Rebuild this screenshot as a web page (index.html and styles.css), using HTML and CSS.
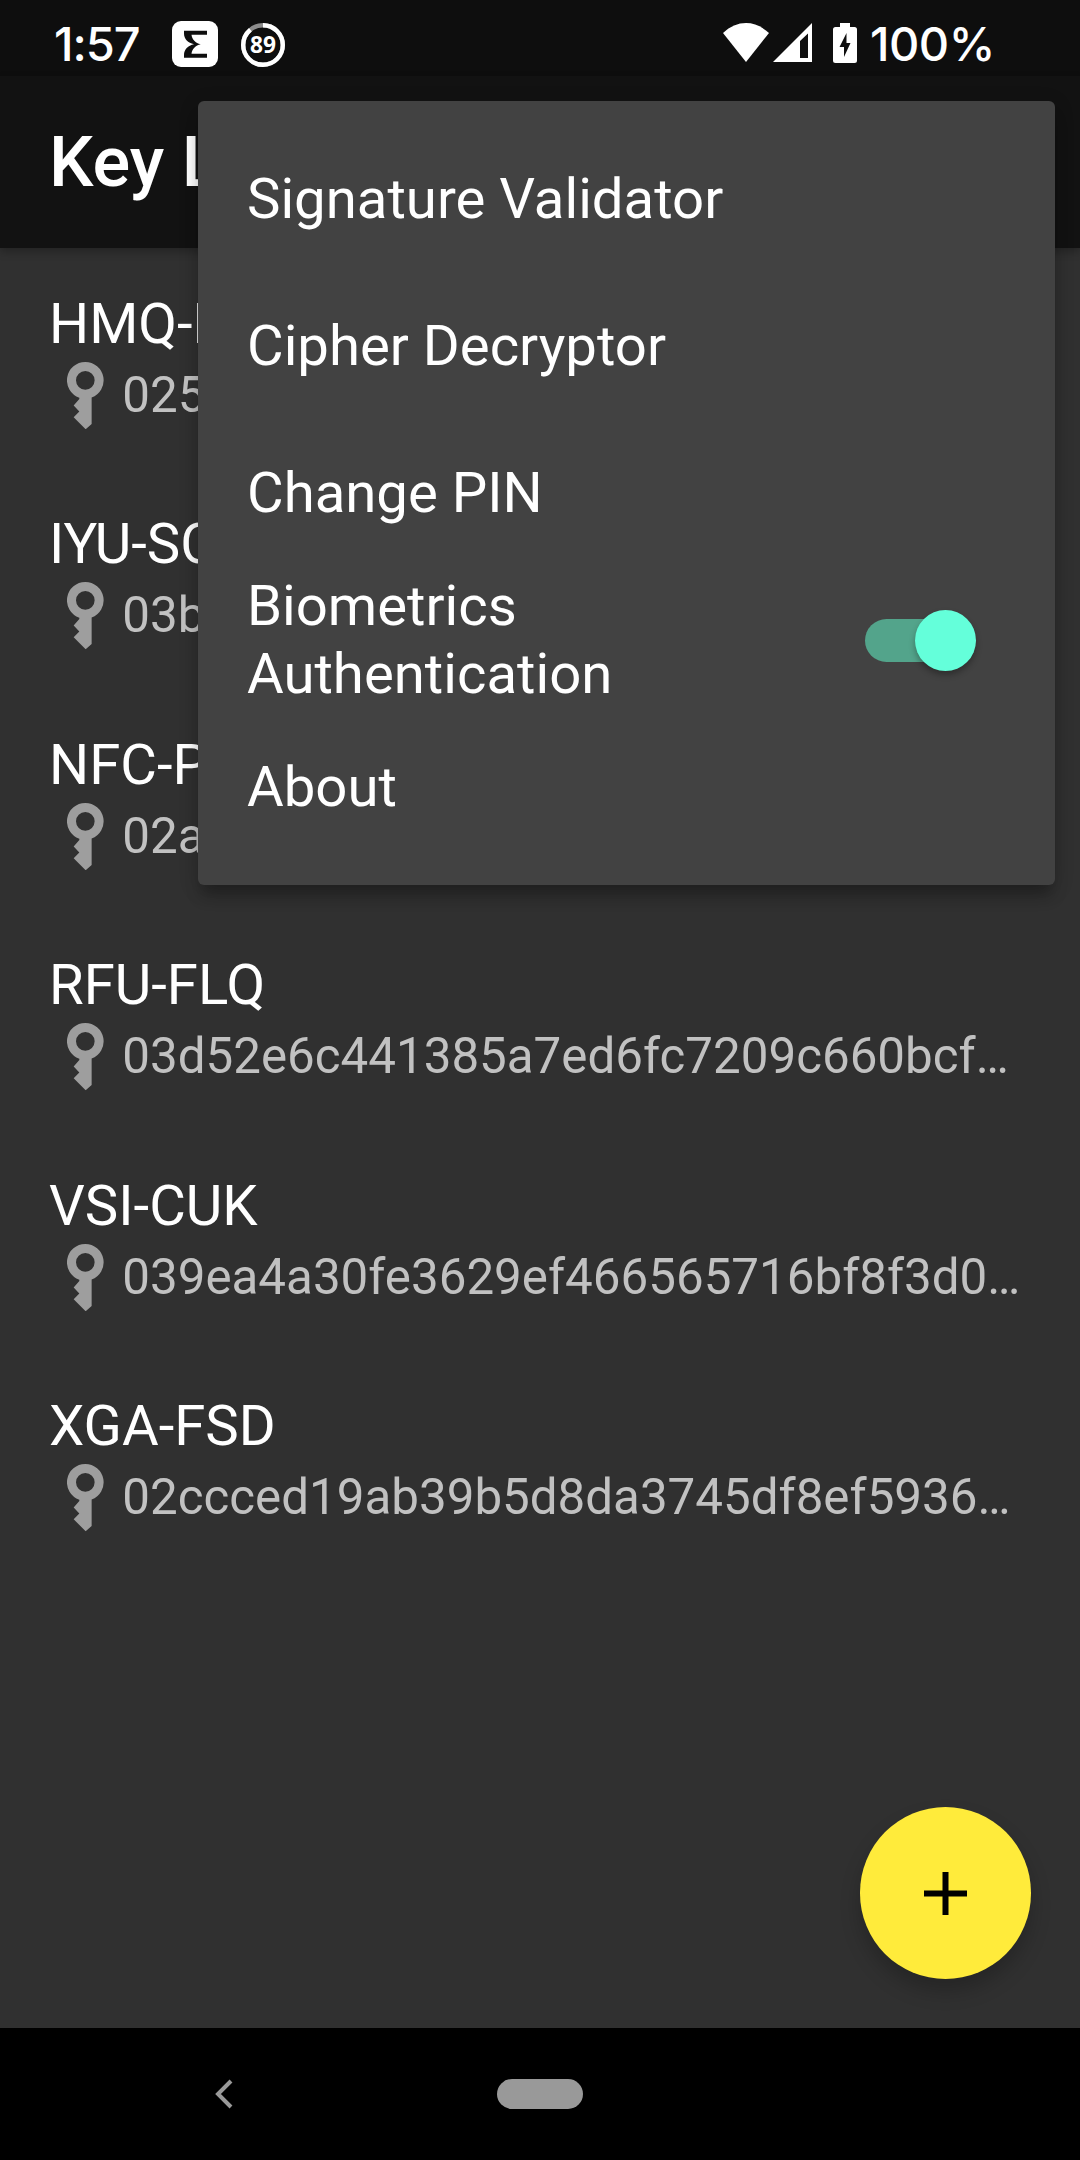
FILE: index.html
```html
<!DOCTYPE html>
<html lang="en">
<head>
<meta charset="utf-8">
<title>Key List</title>
<link rel="stylesheet" href="styles.css">
</head>
<body>
<svg width="0" height="0" class="defs">
  <symbol id="key" viewBox="0 0 112 203">
    <path fill-rule="evenodd" d="M55 0a55 55 0 0 1 19 106.600V186L56 202 20 166 37 149 20 131 37 111V107A55 55 0 0 1 55 0zM55 27a28 28 0 1 0 0 56 28 28 0 0 0 0-56z"/>
  </symbol>
</svg>
<div class="screen">
  <header class="status">
    <span class="clock">1:57</span>
    <svg class="app-badge" viewBox="0 0 46 46"><rect width="46" height="46" rx="9" fill="#fff"/><path d="M12 9.700H35V13.700H19.500C20 18.500 23.500 22 28.700 23.200 23.500 24.500 20 28 19.500 32.700H35V36.700H12V34C12 28.500 16 24.500 22 23.200 16 22 12 18 12 12.500z" fill="#0e0e0e"/></svg>
    <svg class="ring" viewBox="0 0 44 44"><circle cx="22" cy="22" r="19.800" fill="none" stroke="#8c8c8c" stroke-width="4.400"/><circle cx="22" cy="22" r="19.800" fill="none" stroke="#fff" stroke-width="4.400" pathLength="100" stroke-dasharray="89 11" transform="rotate(-90 22 22)"/><text x="22" y="30.300" text-anchor="middle" textLength="26" lengthAdjust="spacingAndGlyphs" class="ring-text">89</text></svg>
    <span class="spacer"></span>
    <svg class="wifi" viewBox="0 0 46 39"><path d="M0 10C14-3.300 32-3.300 46 10L23 39z"/></svg>
    <svg class="signal" viewBox="0 0 39 39"><path fill-rule="evenodd" d="M39 0V39H0zM35 10.500L27 18V35H35z"/></svg>
    <svg class="battery" viewBox="0 0 24 40"><path fill-rule="evenodd" d="M7 0H17V4H21.500Q24 4 24 6.500V37.500Q24 40 21.500 40H2.500Q0 40 0 37.500V6.500Q0 4 2.500 4H7zM13.500 10L6.500 24H11V34L17.500 20H13.500z"/></svg>
    <span class="percent">100%</span>
  </header>
  <div class="appbar"><h1>Key List</h1></div>
  <main class="list">
    <div class="row"><div class="name">HMQ-L</div><div class="hash"><svg class="key"><use href="#key"/></svg><span>025</span></div></div>
    <div class="row"><div class="name">IYU-SC</div><div class="hash"><svg class="key"><use href="#key"/></svg><span>03b</span></div></div>
    <div class="row"><div class="name">NFC-P</div><div class="hash"><svg class="key"><use href="#key"/></svg><span>02a</span></div></div>
    <div class="row"><div class="name">RFU-FLQ</div><div class="hash"><svg class="key"><use href="#key"/></svg><span>03d52e6c441385a7ed6fc7209c660bcf…</span></div></div>
    <div class="row"><div class="name">VSI-CUK</div><div class="hash"><svg class="key"><use href="#key"/></svg><span>039ea4a30fe3629ef466565716bf8f3d0…</span></div></div>
    <div class="row"><div class="name">XGA-FSD</div><div class="hash"><svg class="key"><use href="#key"/></svg><span>02ccced19ab39b5d8da3745df8ef5936…</span></div></div>
  </main>
  <nav class="navbar">
    <svg class="back" viewBox="0 0 18 30"><path d="M16 2L3 15 16 28" fill="none" stroke="#999" stroke-width="4"/></svg>
    <span class="home"></span>
  </nav>
  <button class="fab" aria-label="Add key"><svg viewBox="0 0 43 43"><path d="M18.500 0H24.500V18.500H43V24.500H24.500V43H18.500V24.500H0V18.500H18.500z"/></svg></button>
  <div class="menu">
    <div class="item">Signature Validator</div>
    <div class="item">Cipher Decryptor</div>
    <div class="item">Change PIN</div>
    <div class="item"><span>Biometrics<br>Authentication</span><span class="switch"><span class="thumb"></span></span></div>
    <div class="item">About</div>
  </div>
</div>
</body>
</html>
```

FILE: styles.css
```css
* { box-sizing: border-box; }
body { margin: 0; background: #303030; font-family: Roboto, sans-serif; }
.defs { position: absolute; }
.screen {
  position: relative;
  display: flex;
  flex-direction: column;
  width: 1080px;
  height: 2160px;
  overflow: hidden;
  background: #303030;
  color: #fff;
}
.status {
  display: flex;
  flex: none;
  align-items: flex-start;
  height: 76px;
  padding: 21px 87px 0 54px;
  background: #0e0e0e;
  fill: #fff;
}
.status svg { flex: none; }
.clock, .percent {
  font: 500 47px/45px Inter, sans-serif;
  white-space: nowrap;
}
.clock { width: 118px; letter-spacing: -1px; }
.percent { width: 123px; letter-spacing: -.500px; }
.app-badge { width: 46px; height: 46px; }
.ring { width: 44px; height: 44px; margin: 2px 0 0 23px; }
.ring-text { font: 700 23px "Open Sans", sans-serif; }
.spacer { flex: 1; }
.wifi { width: 46px; height: 39px; margin: 2px 4px 0 0; }
.signal { width: 39px; height: 39px; margin: 2px 21px 0 0; }
.battery { width: 24px; height: 40px; margin: 2px 13px 0 0; }
.appbar {
  z-index: 1;
  display: flex;
  flex: none;
  align-items: center;
  height: 172px;
  padding: 0 49px;
  background: #121212;
  box-shadow: 0 4px 8px rgba(0, 0, 0, .25);
}
.appbar h1 { margin: 0; font-size: 70.400px; font-weight: 500; line-height: 84px; }
.list { flex: 1; padding: 42.600px 0 0 49px; }
.row { height: 220.500px; white-space: nowrap; }
.name { font-size: 56.300px; line-height: 66px; }
.hash {
  display: flex;
  align-items: center;
  height: 68px;
  margin-top: 4.900px;
  padding-left: 18px;
  font-size: 49.300px;
  line-height: 58px;
  color: #c1c1c1;
}
.hash span { padding-bottom: 1.400px; }
.key { width: 37.300px; height: 67.600px; margin-right: 18px; fill: #9e9e9e; }
.navbar {
  display: flex;
  flex: none;
  align-items: center;
  height: 132px;
  padding-left: 215px;
  background: #000;
}
.back { width: 18px; height: 30px; }
.home { width: 86px; height: 30px; margin-left: 264px; border-radius: 15px; background: #999; }
.fab {
  position: absolute;
  right: 49px;
  bottom: 181px;
  display: flex;
  align-items: center;
  justify-content: center;
  width: 171.500px;
  height: 172px;
  padding: 0;
  border: 0;
  border-radius: 50%;
  background: #ffeb3b;
  box-shadow: 0 12px 20px rgba(0, 0, 0, .22);
}
.fab svg { width: 43px; height: 43px; }
.menu {
  position: absolute;
  z-index: 2;
  top: 101px;
  left: 198px;
  width: 857px;
  padding: 24.500px 0;
  border-radius: 6px;
  background: #424242;
  box-shadow: 0 14px 16px -4px rgba(0, 0, 0, .28), 0 4px 20px rgba(0, 0, 0, .15);
}
.item {
  display: flex;
  align-items: center;
  justify-content: space-between;
  height: 147px;
  padding: 0 86px 0 49px;
  font-size: 56.300px;
  line-height: 68px;
}
.switch { position: relative; width: 104px; height: 43px; border-radius: 22px; background: #53a48b; }
.thumb {
  position: absolute;
  top: -9px;
  right: -7px;
  width: 61px;
  height: 61px;
  border-radius: 50%;
  background: #64ffda;
  box-shadow: 0 4px 6px rgba(0, 0, 0, .3);
}
```
